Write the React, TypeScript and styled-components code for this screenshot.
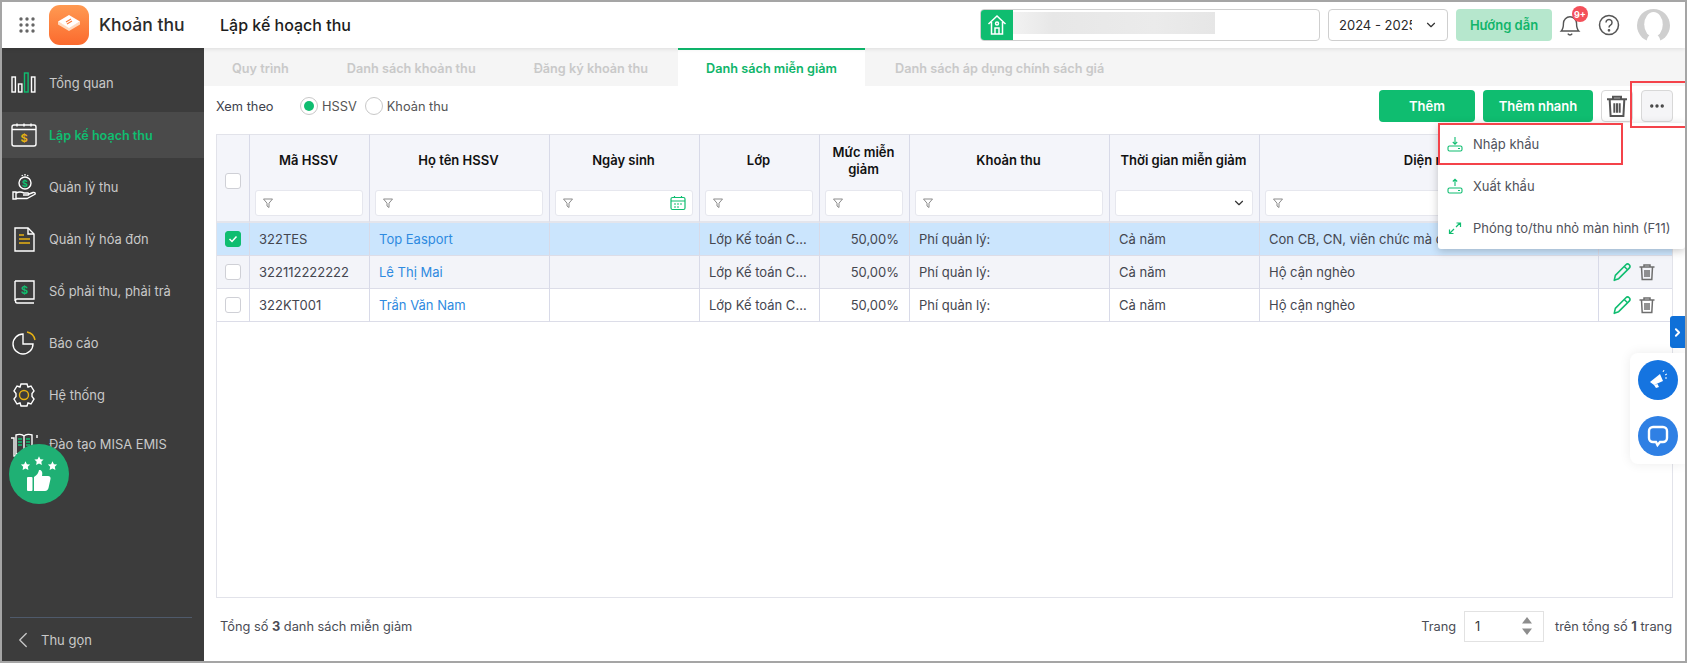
import React from "react";
import styled, { createGlobalStyle } from "styled-components";
import { ChevronDown, ChevronLeft, ChevronRight, MoreHorizontal } from "lucide-react";

const Global = createGlobalStyle`
  html, body { margin: 0; padding: 0; background: #fff; }
  * { box-sizing: border-box; }
  body { font-family: Inter, "Noto Sans", "Liberation Sans", sans-serif; font-size: 13px; color: #40424d; }
`;

const GREEN = "#0fbd70";

const Frame = styled.div`
  position: relative; width: 1687px; height: 663px; border: 2px solid #a5a5a5; overflow: hidden;
  display: flex; flex-direction: column; background: #fff;
`;
const Header = styled.header`
  height: 46px; flex: none; display: flex; align-items: center; background: #fff; padding-left: 17px;
  position: relative; z-index: 2; box-shadow: 0 1px 4px rgba(0,0,0,.1);
`;
const AppGrid = styled.svg`width: 16px; height: 16px; margin-right: 14px; flex: none;`;
const Logo = styled.svg`width: 40px; height: 40px; flex: none; margin-right: 10px;`;
const AppName = styled.div`font-size: 17.5px; font-weight: 500; color: #2b2b2b; width: 121px; margin-top: -2px;`;
const PageTitle = styled.div`font-size: 16px; font-weight: 500; color: #1d1d1d; width: 760px;`;
const School = styled.div`
  width: 340px; height: 32px; border: 1px solid #cfcfcf; border-radius: 4px; display: flex; overflow: hidden; margin-right: 8px;
`;
const HomeBox = styled.div`width: 32px; background: ${GREEN}; display: flex; align-items: center; justify-content: center; flex: none;`;
const Blurred = styled.div`
  width: 202px; height: 22px; margin-top: 2px;
  background: linear-gradient(90deg, #f2f2f2 0%, #e7e7e7 20%, #ebebeb 70%, #e6e6e6 100%);
`;
const YearSelect = styled.div`
  width: 120px; height: 32px; border: 1px solid #cfcfcf; border-radius: 4px; display: flex; align-items: center;
  padding-left: 10px; color: #2a2a2a; font-size: 13px; margin-right: 8px; position: relative;
`;
const YearText = styled.div`width: 73px; overflow: hidden; white-space: nowrap;`;
const YearChevron = styled(ChevronDown)`position: absolute; right: 9px; top: 8px; color: #333;`;
const GuideBtn = styled.div`
  width: 96px; height: 32px; background: #b6e7cd; color: #12b56a; border-radius: 4px; font-weight: 600;
  display: flex; align-items: center; justify-content: center; font-size: 13px; margin-right: 7px;
`;
const Bell = styled.div`position: relative; width: 26px; height: 32px; display: flex; align-items: center; margin-right: 13px;`;
const Badge = styled.div`
  position: absolute; left: 13px; top: -3px; width: 16px; height: 16px; border-radius: 50%; background: #f4505a; color: #fff;
  font-size: 9px; font-weight: 700; display: flex; align-items: center; justify-content: center;
`;
const HeaderIcon = styled.svg`flex: none; margin-right: 17px;`;

const Body = styled.div`flex: 1; display: flex; min-height: 0;`;
const Sidebar = styled.aside`
  width: 202px; flex: none; background: #3c3c3c; padding-top: 12px; display: flex; flex-direction: column;
`;
const NavList = styled.nav`flex: 1;`;
const NavItem = styled.div<{ $active?: boolean; $raise?: boolean }>`
  height: 46px; margin-bottom: 6px; display: flex; align-items: center; padding-left: 8px; gap: 11px;
  padding-bottom: ${p => (p.$raise ? "6px" : "0")};
  background: ${p => (p.$active ? "#4a4a4a" : "transparent")};
  color: ${p => (p.$active ? GREEN : "#c9c9c9")};
  font-weight: ${p => (p.$active ? 600 : 400)};
  font-size: ${p => (p.$active ? "12.6px" : "12.9px")};
`;
const NavIcon = styled.svg`width: 28px; height: 28px; flex: none;`;
const Collapse = styled.div`
  margin: 0 12px 0 8px; border-top: 1px solid #4f5a6b; height: 44px; display: flex; align-items: center; color: #c9c9c9; gap: 5px;
  font-size: 13px;
`;
const Thumb = styled.div`
  position: absolute; left: 7px; top: 442px; width: 60px; height: 60px; border-radius: 50%; background: #1fb074;
  display: flex; align-items: center; justify-content: center; z-index: 3;
`;

const Main = styled.main`flex: 1; min-width: 0; display: flex; flex-direction: column; background: #fff;`;
const TabBar = styled.div`height: 38px; flex: none; background: #f5f5f5; display: flex;`;
const Tab = styled.div<{ $active?: boolean }>`
  padding: 0 28px; display: flex; align-items: center; font-weight: 600; font-size: 12.7px; margin-right: 2px;
  color: ${p => (p.$active ? "#10b56a" : "#c9c9c9")};
  background: ${p => (p.$active ? "#fff" : "transparent")};
  border-top: 2px solid ${p => (p.$active ? GREEN : "transparent")};
`;
const Content = styled.div`flex: 1; min-height: 0; display: flex; flex-direction: column; padding: 4px 12px 0 12px;`;
const Toolbar = styled.div`height: 32px; flex: none; margin-bottom: 12px; display: flex; align-items: center;`;
const ViewLabel = styled.span`width: 84px; color: #40424d; font-size: 12.8px;`;
const Radio = styled.span<{ $on?: boolean }>`
  width: 18px; height: 18px; border-radius: 50%; border: 1px solid #c8c8c8; background: #fff; display: flex; align-items: center;
  justify-content: center; margin-right: 4px;
  &::after { content: ""; width: 10px; height: 10px; border-radius: 50%; background: ${p => (p.$on ? GREEN : "transparent")}; }
`;
const RadioLabel = styled.span`margin-right: 8px; color: #555; font-size: 12.8px;`;
const Spacer = styled.div`flex: 1;`;
const GreenBtn = styled.button<{ $w: number }>`
  width: ${p => p.$w}px; height: 32px; border: 0; border-radius: 4px; background: ${GREEN}; color: #fff; font: 600 13px Inter, sans-serif; margin-right: 8px;
`;
const IconBtn = styled.button<{ $grey?: boolean }>`
  width: 32px; height: 32px; border: 1px solid #d8d8d8; border-radius: 4px; background: ${p => (p.$grey ? "#f5f5f7" : "#fff")};
  display: flex; align-items: center; justify-content: center; padding: 0; margin-left: ${p => (p.$grey ? "8px" : "0")}; color: #444;
`;

const TableWrap = styled.div`height: 464px; flex: none; border: 1px solid #e2e3ea; border-top: 0; overflow: hidden;`;
const Grid = styled.table`width: 1456px; border-collapse: separate; border-spacing: 0; table-layout: fixed;`;
const Col = styled.col<{ $w: number }>`width: ${p => p.$w}px;`;
const Th = styled.th`
  height: 89px; vertical-align: top; padding: 0; background: #f4f5fa; border-right: 1px solid #d8dae8; border-top: 1px solid #e2e3ea;
  border-bottom: 2px solid #e4e5ec; font-weight: 600; font-size: 13px; color: #111;
`;
const ThTitle = styled.div<{ $shift?: boolean }>`
  height: 51px; margin-bottom: 4px; display: flex; align-items: center; justify-content: center; text-align: center; line-height: 17px;
  padding: ${p => (p.$shift ? "0 0 0 46px" : "0 9px 0 7px")};
`;
const FilterSlot = styled.div`padding: 0 6px 0 5px;`;
const Filter = styled.div`
  height: 26px; background: #fff; border: 1px solid #e6e7ee; border-radius: 3px; display: flex; align-items: center; padding: 0 6px;
  justify-content: space-between; color: #333;
`;
const Td = styled.td<{ $bg: string; $right?: boolean; $flush?: boolean }>`
  height: 33px; padding: ${p => (p.$flush ? "0" : "0 10px 0 9px")}; background: ${p => p.$bg}; border-right: 1px solid #d8dae8; border-bottom: 1px solid #dcdde8;
  white-space: nowrap; overflow: hidden; text-overflow: ellipsis; font-size: 13px; color: #44464f;
  text-align: ${p => (p.$right ? "right" : "left")};
`;
const NameLink = styled.span`color: #2e8ae0;`;
const CheckCell = styled.div`display: flex; justify-content: center; padding-right: 1px;`;
const HeadCheck = styled.div`display: flex; justify-content: center; padding: 38px 1px 0 0;`;
const Box = styled.span<{ $on?: boolean }>`
  width: 16px; height: 16px; flex: none; border-radius: 3px; border: 1px solid ${p => (p.$on ? GREEN : "#cfd0d6")}; background: ${p => (p.$on ? GREEN : "#fff")};
  display: flex; align-items: center; justify-content: center;
`;
const Actions = styled.div`display: flex; gap: 6px; justify-content: flex-end; align-items: center; padding-right: 6px;`;

const Footer = styled.div`flex: 1; display: flex; align-items: center; padding: 0 1px 6px 4px; color: #4a4c55; font-size: 12.8px; margin-top: -1px;`;
const PagerInput = styled.div`
  width: 80px; height: 31px; border: 1px solid #e2e2e2; margin: 0 11px 0 8px; display: flex; align-items: center; justify-content: space-between;
  padding: 0 10px; color: #333;
`;
const Spin = styled.svg`width: 12px; height: 20px; flex: none;`;

const Menu = styled.div`
  position: absolute; left: 1436px; top: 121px; width: 247px; height: 126px; background: #fff; border-radius: 3px; z-index: 4;
  box-shadow: 0 2px 8px rgba(0,0,0,.22);
`;
const MenuItem = styled.div`height: 42px; display: flex; align-items: center; padding-left: 9px; gap: 10px; color: #50525b; font-size: 13px;`;
const MenuIcon = styled.svg`width: 16px; height: 16px; flex: none;`;
const Mark = styled.div<{ $x: number; $y: number; $w: number; $h: number }>`
  position: absolute; left: ${p => p.$x}px; top: ${p => p.$y}px; width: ${p => p.$w}px; height: ${p => p.$h}px;
  border: 2px solid #f4434a; z-index: 5;
`;
const SideTab = styled.div`
  position: absolute; left: 1668px; top: 314px; width: 15px; height: 32px; background: #0f70d8; border-radius: 3px 0 0 3px; color: #fff;
  display: flex; align-items: center; justify-content: center; z-index: 3;
`;
const Float = styled.div`
  position: absolute; left: 1628px; top: 351px; width: 55px; height: 111px; background: #fff; border-radius: 8px 0 0 8px;
  box-shadow: 0 0 12px rgba(0,0,0,.08); z-index: 3; padding: 7px 0 0 8px; display: flex; flex-direction: column; gap: 16px;
`;
const FloatBtn = styled.div<{ $c: string }>`
  width: 40px; height: 40px; border-radius: 50%; background: ${p => p.$c}; display: flex; align-items: center; justify-content: center;
`;

const Funnel = () => (
  <svg width="12" height="12" viewBox="0 0 12 12" fill="none" stroke="#8a8a8a" strokeWidth="1">
    <path d="M1.5 2h9L7 6.2V10.5L5 9V6.2z" />
  </svg>
);

const s = { stroke: "#fff", strokeWidth: 1.4, fill: "none" } as const;
const gold = "#e6b113";
const navs: { t: string; i: React.ReactNode; active?: boolean; raise?: boolean }[] = [
  { t: "Tổng quan", i: <><rect x="2" y="8" width="3.4" height="15" {...s} /><rect x="8.5" y="15" width="3.4" height="8" {...s} /><rect x="14.5" y="4" width="3.6" height="19" stroke={GREEN} strokeWidth="1.4" fill="none" /><rect x="21.5" y="8" width="3.4" height="15" {...s} /></> },
  { t: "Lập kế hoạch thu", active: true, i: <><rect x="2" y="4" width="24" height="21" rx="2" {...s} /><path d="M2 8.5h24M7 2.5v3M14 2.5v3M21 2.5v3" {...s} /><text x="14" y="21" textAnchor="middle" fontSize="11" fontWeight="700" fill={gold}>$</text></> },
  { t: "Quản lý thu", i: <><circle cx="15" cy="10" r="6" {...s} /><text x="15" y="13.5" textAnchor="middle" fontSize="9" fontWeight="700" fill={GREEN}>$</text><path d="M15 1v1.5M12 2l.5 1M18 2l-.5 1" {...s} /><path d="M3 19h3v7H3zM6 20c4-2 6-1 8 0h4c1 .5 1 2 0 2h-5M18 21.5l5-2c2-.5 3 1 1.5 2L17 25.5H6" {...s} /></> },
  { t: "Quản lý hóa đơn", i: <><path d="M5 3h13l6 6v17H5z" {...s} /><path d="M18 3v6h6" {...s} /><path d="M9 10h5M9 14h11M9 18h11" stroke={gold} strokeWidth="1.5" /></> },
  { t: "Sổ phải thu, phải trả", i: <><path d="M5 4h19v18H7c-2 0-2 4 0 4h17M5 4v20" {...s} /><text x="14.5" y="17" textAnchor="middle" fontSize="11" fontWeight="700" fill={GREEN}>$</text></> },
  { t: "Báo cáo", i: <><path d="M13 5a10 10 0 1 0 10 10H13z" {...s} /><path d="M17 3a10 10 0 0 1 8 8" stroke={gold} strokeWidth="1.4" fill="none" /></> },
  { t: "Hệ thống", i: <><path d="M11 3h6l1 3 3-1 3 5-2 2.5v3l2 2.5-3 5-3-1-1 3h-6l-1-3-3 1-3-5 2-2.5v-3l-2-2.5 3-5 3 1z" {...s} /><circle cx="14" cy="14" r="4.5" stroke={gold} strokeWidth="1.4" fill="none" /></> },
  { t: "Đào tạo MISA EMIS", raise: true, i: <><path d="M1 8h3v18h10M27 8v-3M14 6c-2-2-6-2-8-1v19c2-1 6-1 8 1 2-2 6-2 8-1V5c-2-1-6-1-8 1zM14 6v19" {...s} /><path d="M8 9h4M8 12h4M8 15h4M16 9h4M16 12h4M16 15h4" stroke={GREEN} strokeWidth="1.4" /></> },
];

const tabs = ["Quy trình", "Danh sách khoản thu", "Đăng ký khoản thu", "Danh sách miễn giảm", "Danh sách áp dụng chính sách giá"];
const widths = [33, 120, 180, 150, 120, 90, 200, 150, 339, 74];
const rows = [
  { id: "322TES", name: "Top Easport", area: "Con CB, CN, viên chức mà con đang học tại trường", bg: "#cbe5fd", on: true },
  { id: "322112222222", name: "Lê Thị Mai", area: "Hộ cận nghèo", bg: "#f3f4f9" },
  { id: "322KT001", name: "Trần Văn Nam", area: "Hộ cận nghèo", bg: "#fff" },
];

const Pencil = () => (
  <svg width="20" height="20" viewBox="0 0 18 18" fill="none" stroke={GREEN} strokeWidth="1.4" strokeLinejoin="round">
    <path d="M2 16.5l1-4.5L12.5 2.5c1-1 2-1 3 0s1 2 0 3L6 15z" /><path d="M11 4l3 3" />
  </svg>
);
const Trash = ({ size = 18, color = "#6e6e6e" }: { size?: number; color?: string }) => (
  <svg width={size} height={size} viewBox="0 0 18 18" fill="none" stroke={color} strokeWidth="1.5">
    <path d="M1.5 4h15M6 4V2h6v2M3.5 4l.7 12.5h9.6L14.5 4M7 7v7M9 7v7M11 7v7" />
  </svg>
);
const Star = ({ x, y }: { x: number; y: number }) => (
  <path transform={`translate(${x} ${y})`} d="M0-4.8l1.4 3 3.2.4-2.3 2.2.6 3.2L0 2.4-2.9 4l.6-3.2-2.3-2.2 3.2-.4z" />
);

export default function App() {
  return (
    <Frame>
      <Global />
      <Header>
        <AppGrid viewBox="0 0 16 16" fill="#666">
          {[2, 8, 14].flatMap(y => [2, 8, 14].map(x => <circle key={`${x}-${y}`} cx={x} cy={y} r="1.7" />))}
        </AppGrid>
        <Logo viewBox="0 0 40 40">
          <defs>
            <linearGradient id="lg" x1="0" y1="0" x2="0" y2="1"><stop offset="0" stopColor="#ff9a52" /><stop offset="1" stopColor="#fb6a2e" /></linearGradient>
          </defs>
          <rect width="40" height="40" rx="11" fill="url(#lg)" />
          <path d="M20 22l11-5.5v3L20 26 9 19.5v-3z" fill="#ffd9bf" />
          <path d="M20 10l11 6.5L20 23 9 16.5z" fill="#fff" />
          <path d="M17 17l5-3M18 19l5-3" stroke="#fb7a3a" strokeWidth="1.2" />
        </Logo>
        <AppName>Khoản thu</AppName>
        <PageTitle>Lập kế hoạch thu</PageTitle>
        <School>
          <HomeBox>
            <svg width="20" height="22" viewBox="0 0 20 22" fill="none" stroke="#fff" strokeWidth="1.5">
              <path d="M1.5 10L10 2l8.5 8M4.5 8v12h11V8M8 20v-6h4v6" /><circle cx="10" cy="9.5" r="1.5" />
            </svg>
          </HomeBox>
          <Blurred />
        </School>
        <YearSelect>
          <YearText>2024 - 2025</YearText>
          <YearChevron size={14} />
        </YearSelect>
        <GuideBtn>Hướng dẫn</GuideBtn>
        <Bell>
          <svg width="22" height="24" viewBox="0 0 20 22" fill="none" stroke="#555" strokeWidth="1.3">
            <path d="M2 16.5c2-2 2-4 2-7a6 6 0 0 1 12 0c0 3 0 5 2 7zM8 19c1 1.5 3 1.5 4 0" />
          </svg>
          <Badge>9+</Badge>
        </Bell>
        <HeaderIcon width="22" height="22" viewBox="0 0 22 22" fill="none" stroke="#555" strokeWidth="1.5">
          <circle cx="11" cy="11" r="9.5" />
          <path d="M8 8.5a3 3 0 1 1 4.5 2.6c-1 .6-1.5 1.2-1.500 2.4" />
          <circle cx="11" cy="16.3" r=".6" fill="#555" />
        </HeaderIcon>
        <svg width="33" height="33" viewBox="0 0 32 32">
          <circle cx="16" cy="16" r="16" fill="#cfcfcf" />
          <ellipse cx="16" cy="15" rx="9" ry="12" fill="#fff" />
          <path d="M9 32c1-5 3-8 7-8s6 3 7 8z" fill="#fff" />
        </svg>
      </Header>
      <Body>
        <Sidebar>
          <NavList>
            {navs.map(n => (
              <NavItem key={n.t} $active={n.active} $raise={n.raise}>
                <NavIcon viewBox="0 0 28 28">{n.i}</NavIcon>
                {n.t}
              </NavItem>
            ))}
          </NavList>
          <Collapse><ChevronLeft size={26} strokeWidth={1.2} />Thu gọn</Collapse>
        </Sidebar>
        <Main>
          <TabBar>
            {tabs.map((t, i) => <Tab key={t} $active={i === 3}>{t}</Tab>)}
          </TabBar>
          <Content>
            <Toolbar>
              <ViewLabel>Xem theo</ViewLabel>
              <Radio $on /><RadioLabel>HSSV</RadioLabel>
              <Radio /><RadioLabel>Khoản thu</RadioLabel>
              <Spacer />
              <GreenBtn $w={96}>Thêm</GreenBtn>
              <GreenBtn $w={110}>Thêm nhanh</GreenBtn>
              <IconBtn><Trash size={24} color="#555" /></IconBtn>
              <IconBtn $grey><MoreHorizontal size={18} strokeWidth={2.5} /></IconBtn>
            </Toolbar>
            <TableWrap>
              <Grid>
                <colgroup>{widths.map((w, i) => <Col key={i} $w={w} />)}</colgroup>
                <thead>
                  <tr>
                    <Th><HeadCheck><Box /></HeadCheck></Th>
                    {["Mã HSSV", "Họ tên HSSV", "Ngày sinh", "Lớp", "Mức miễn giảm", "Khoản thu", "Thời gian miễn giảm"].map((h, i) => (
                      <Th key={h}>
                        <ThTitle>{h}</ThTitle>
                        <FilterSlot>
                          <Filter>
                            {i === 6 ? <span /> : <Funnel />}
                            {i === 2 && (
                              <svg width="16" height="16" viewBox="0 0 16 16" fill="none" stroke={GREEN} strokeWidth="1.2">
                                <rect x="1" y="2.5" width="14" height="12" rx="1.5" /><path d="M1 6h14M4.5 1v2M11.5 1v2M4 9h2M7 9h2M10 9h2M4 12h2M7 12h2" />
                              </svg>
                            )}
                            {i === 6 && <ChevronDown size={14} strokeWidth={2} />}
                          </Filter>
                        </FilterSlot>
                      </Th>
                    ))}
                    <Th>
                      <ThTitle $shift>Diện miễn giảm</ThTitle>
                      <FilterSlot><Filter><Funnel /></Filter></FilterSlot>
                    </Th>
                    <Th />
                  </tr>
                </thead>
                <tbody>
                  {rows.map(r => (
                    <tr key={r.id}>
                      <Td $bg={r.bg} $flush><CheckCell>
                        <Box $on={r.on}>
                          {r.on && <svg width="10" height="10" viewBox="0 0 10 10" fill="none" stroke="#fff" strokeWidth="1.5"><path d="M1.5 5l2.5 2.5 4.5-5" /></svg>}
                        </Box>
                      </CheckCell></Td>
                      <Td $bg={r.bg}>{r.id}</Td>
                      <Td $bg={r.bg}><NameLink>{r.name}</NameLink></Td>
                      <Td $bg={r.bg} />
                      <Td $bg={r.bg}>Lớp Kế toán Cao đẳng</Td>
                      <Td $bg={r.bg} $right>50,00%</Td>
                      <Td $bg={r.bg}>Phí quản lý:</Td>
                      <Td $bg={r.bg}>Cả năm</Td>
                      <Td $bg={r.bg}>{r.area}</Td>
                      <Td $bg={r.bg}><Actions><Pencil /><Trash /></Actions></Td>
                    </tr>
                  ))}
                </tbody>
              </Grid>
            </TableWrap>
            <Footer>
              <span>Tổng số <b>3</b> danh sách miễn giảm</span>
              <Spacer />
              <span>Trang</span>
              <PagerInput>
                1
                <Spin viewBox="0 0 12 20" fill="#8d8d8d"><path d="M6 1l5 6.5H1zM1 12.5h10L6 19z" /></Spin>
              </PagerInput>
              <span>trên tổng số <b>1</b> trang</span>
            </Footer>
          </Content>
        </Main>
      </Body>

      <Thumb>
        <svg width="40" height="40" viewBox="0 0 40 40" fill="#fff">
          <Star x={6.5} y={12} /><Star x={20} y={7} /><Star x={33.5} y={12} />
          <rect x="8" y="23" width="5.5" height="14" rx="1" />
          <path d="M15 23c3-2 4.5-4 5-7 2.5-.5 4 2 3 6h6c2 0 3 1.5 2.5 3l-2 9c-.3 1.5-1.5 3-3.500 3H15z" />
        </svg>
      </Thumb>

      <Menu>
        <MenuItem>
          <MenuIcon viewBox="0 0 16 16" fill="none" stroke={GREEN} strokeWidth="1.1">
            <path d="M8 1v7M5.8 6L8 8.3 10.2 6" /><rect x="1" y="10" width="14" height="5" rx="1.5" /><path d="M11 12.5h2" />
          </MenuIcon>
          Nhập khẩu
        </MenuItem>
        <MenuItem>
          <MenuIcon viewBox="0 0 16 16" fill="none" stroke={GREEN} strokeWidth="1.1">
            <path d="M8 8V1.500M5.800 3.500L8 1.300l2.200 2.200" /><rect x="1" y="10" width="14" height="5" rx="1.5" /><path d="M11 12.5h2" />
          </MenuIcon>
          Xuất khẩu
        </MenuItem>
        <MenuItem>
          <MenuIcon viewBox="0 0 16 16" fill="none" stroke={GREEN} strokeWidth="1.2">
            <path d="M9 7l4-4M9.500 3H13.500v4M7 9l-4 4M2.500 9.500v4h4" />
          </MenuIcon>
          Phóng to/thu nhỏ màn hình (F11)
        </MenuItem>
      </Menu>
      <Mark $x={1436} $y={121} $w={185} $h={42} />
      <Mark $x={1628} $y={79} $w={60} $h={47} />
      <SideTab><ChevronRight size={13} strokeWidth={3.5} /></SideTab>
      <Float>
        <FloatBtn $c="#1574e0">
          <svg width="22" height="22" viewBox="0 0 22 22" fill="#fff">
            <path d="M3 13L13 5l3 7-9 4zM7 16l2 3 3-1-1.500-3z" /><path d="M16 3l1-2M18 6l2-1M18 9h2" stroke="#fff" strokeWidth="1" />
          </svg>
        </FloatBtn>
        <FloatBtn $c="#2f80e4">
          <svg width="24" height="24" viewBox="0 0 24 24" fill="none" stroke="#fff" strokeWidth="2.4">
            <path d="M7 3h10a4 4 0 0 1 4 4v7a4 4 0 0 1-4 4h-3l-2.5 3L10 18H7a4 4 0 0 1-4-4V7a4 4 0 0 1 4-4z" />
          </svg>
        </FloatBtn>
      </Float>
    </Frame>
  );
}
